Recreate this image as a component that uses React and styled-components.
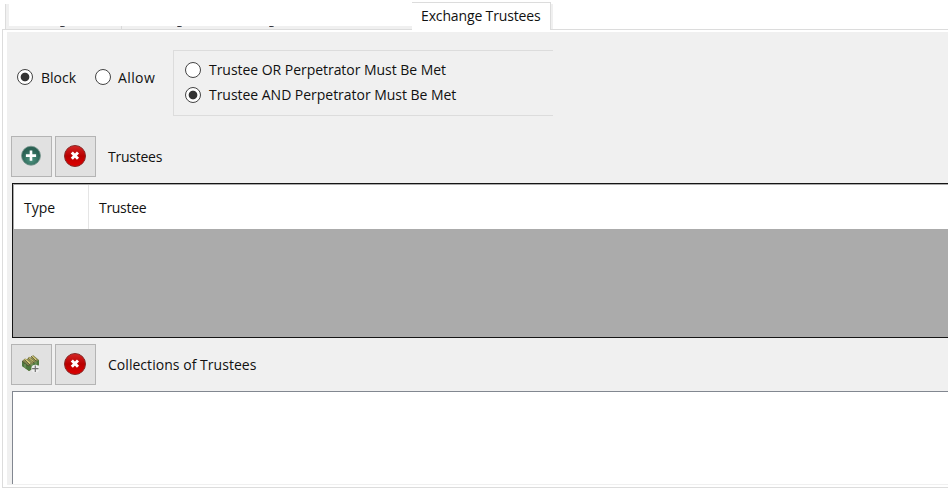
import React from 'react';
import styled, { createGlobalStyle } from 'styled-components';

const Global = createGlobalStyle`
  *{box-sizing:border-box}
  body{margin:0;background:#fff;overflow:hidden}
`;
const Window = styled.main`
  width:948px;height:494px;padding-left:2px;display:flex;flex-direction:column;
  font:14px/16px "Open Sans","Noto Sans",sans-serif;color:#111;background:#fff;
`;
const Tabs = styled.div`display:flex;height:29px;align-items:flex-end;padding-left:3px;`;
const HiddenTabs = styled.div`
  width:407px;height:25px;display:flex;align-items:flex-end;border-left:1px solid #dcdcdc;
  background:linear-gradient(90deg,#f0f0f0 3px,transparent 3px);
`;
const HiddenTab = styled.div`
  height:3px;width:${p => p.$w}px;margin-left:${p => p.$gap || 0}px;background:#f0f0f0;
  border-left:${p => p.$line ? '1px solid #d9d9d9' : '0'};display:flex;
`;
const Tail = styled.span`
  width:5px;height:1px;margin-left:${p => p.$gap}px;
  background:linear-gradient(90deg,#b98c69,#34343f 30%,#34343f 65%,#8fb9d5);
`;
const ActiveTab = styled.div`
  width:139px;height:28px;border-top:1px solid #dcdcdc;border-right:1px solid #dcdcdc;
  padding:5px 0 0 9px;background:#fff;margin-bottom:-1px;z-index:1;
`;
const TabEdge = styled.div`width:2px;height:25px;background:#f0f0f0;`;
const Page = styled.section`
  height:459px;border:solid #dcdcdc;border-width:1px 0 1px 1px;padding:2px 0 2px 4px;background:#fff;
`;
const Body = styled.div`height:453px;background:#f0f0f0;padding:18px 0 0 4px;`;
const Label = styled.span`
  display:block;white-space:nowrap;letter-spacing:${p => p.$ls || 0}px;padding-top:${p => p.$drop || 0}px;
`;
const Options = styled.div`display:flex;height:66px;`;
const Actions = styled.div`display:flex;padding:18px 0 0 6px;width:162px;`;
const Choice = styled.label`display:flex;align-items:center;gap:${p => p.$gap || 8}px;height:18px;width:${p => p.$w || 'auto'};`;
const Radio = styled.span`
  width:16px;height:16px;flex:none;border:1px solid #444;border-radius:50%;
  background:${p => p.$on ? 'radial-gradient(circle,#333 3.8px,#fff 4.8px)' : '#fff'};
`;
const Group = styled.div`
  width:380px;height:66px;border:solid #dcdcdc;border-width:1px 0 1px 1px;
  padding:10px 0 0 11px;display:flex;flex-direction:column;gap:7px;
`;
const Toolbar = styled.div`
  display:flex;height:41px;gap:3px;align-items:center;margin-top:${p => p.$top}px;
`;
const Button = styled.button`
  width:41px;height:41px;border:1px solid #b4b4b4;background:#e1e1e1;padding:0 1px 1px 0;
  display:flex;align-items:center;justify-content:center;
`;
const Caption = styled.div`padding-left:9px;`;
const Table = styled.div`
  margin:6px 0 0 1px;height:155px;border:solid #151515;border-width:1px 0 1px 1px;
  background:#ababab;padding:0 0 0 1px;
`;
const Header = styled.div`display:flex;height:45px;background:#fff;border-top:1px solid #aaa;`;
const Cell = styled.div`
  width:${p => p.$w}px;padding:15px 0 0 10px;border-right:${p => p.$line ? '1px solid #e5e5e5' : 0};
`;
const List = styled.div`
  height:93px;margin:6px 0 0 1px;background:#fff;border:solid #828790;border-width:1px 0 0 1px;
`;

const AddIcon = () => (
  <svg width="22" height="22" viewBox="0 0 22 22">
    <defs><radialGradient id="green" cx=".5" cy=".7"><stop stopColor="#4f9682"/><stop offset="1" stopColor="#2b6254"/></radialGradient></defs>
    <circle cx="11" cy="10.7" r="9.5" fill="url(#green)" stroke="#79968e" strokeWidth=".8"/>
    <path d="M11 5.5v10.2M5.9 10.6h10.2" stroke="#fff" strokeWidth="2.6"/>
  </svg>
);
const DeleteIcon = () => (
  <svg width="24" height="24" viewBox="0 0 24 24">
    <defs><linearGradient id="red" x2="0" y2="1"><stop stopColor="#d52626"/><stop offset=".5" stopColor="#b90000"/><stop offset="1" stopColor="#df0000"/></linearGradient></defs>
    <circle cx="12" cy="12" r="10.5" fill="url(#red)" stroke="#852c29"/>
    <path d="m8.8 8.5 6.2 6.2m0-6.2-6.2 6.2" stroke="#fff" strokeWidth="3"/>
  </svg>
);
const CollectionIcon = () => (
  <svg width="22" height="22" viewBox="0 0 22 22">
    <path d="m2 8 3-2.5 2 .7 2-2.4 2 .8L13 2l6 5v5L9 18l-7-5z" fill="#82834f"/>
    <path d="m2 8 7 5v5l-7-5zM9 13l10-6v5L9 18z" fill="#4e773d"/>
    <path d="m5 6.5 5 4M8.5 5l4.5 4M12 3.5 16 7" stroke="#d8cb7b" strokeWidth="1.7"/>
    <path d="m2 8 6 5 2-1-5-5m3-2 6 5m-3-7 5 5" fill="none" stroke="#4d512e" strokeWidth=".8"/>
    <path d="M5 11v4m7-4v4m4-6v4" stroke="#91ac78" strokeWidth=".8"/>
    <circle cx="15.3" cy="15.7" r="3.9" fill="#eee"/>
    <path d="M15.3 12.5v6.4m-3.2-3.2h6.4" stroke="#707070" strokeWidth="1.2"/>
  </svg>
);

export default function App() {
  return <><Global /><Window>
    <Tabs>
      <HiddenTabs>
        <HiddenTab $gap={3} $w={112}><Tail $gap={51} /></HiddenTab>
        <HiddenTab $line $w={291}><Tail $gap={55} /><Tail $gap={87} /></HiddenTab>
      </HiddenTabs>
      <ActiveTab><Label $ls={-.14}>Exchange Trustees</Label></ActiveTab><TabEdge />
    </Tabs>
    <Page><Body>
      <Options>
        <Actions><Choice $w="78px"><Radio $on /><Label $drop={2}>Block</Label></Choice><Choice $gap={7}><Radio /><Label $drop={2} $ls={.4}>Allow</Label></Choice></Actions>
        <Group>
          <Choice><Radio /><Label $ls={-.04}>Trustee OR Perpetrator Must Be Met</Label></Choice>
          <Choice><Radio $on /><Label $ls={-.03}>Trustee AND Perpetrator Must Be Met</Label></Choice>
        </Group>
      </Options>
      <Toolbar $top={20}><Button><AddIcon /></Button><Button><DeleteIcon /></Button><Caption><Label $ls={-.25}>Trustees</Label></Caption></Toolbar>
      <Table><Header><Cell $line $w={75}><Label>Type</Label></Cell><Cell $w={850}><Label $ls={-.3}>Trustee</Label></Cell></Header></Table>
      <Toolbar $top={6}><Button><CollectionIcon /></Button><Button><DeleteIcon /></Button><Caption><Label $ls={.04}>Collections of Trustees</Label></Caption></Toolbar>
      <List />
    </Body></Page>
  </Window></>;
}
